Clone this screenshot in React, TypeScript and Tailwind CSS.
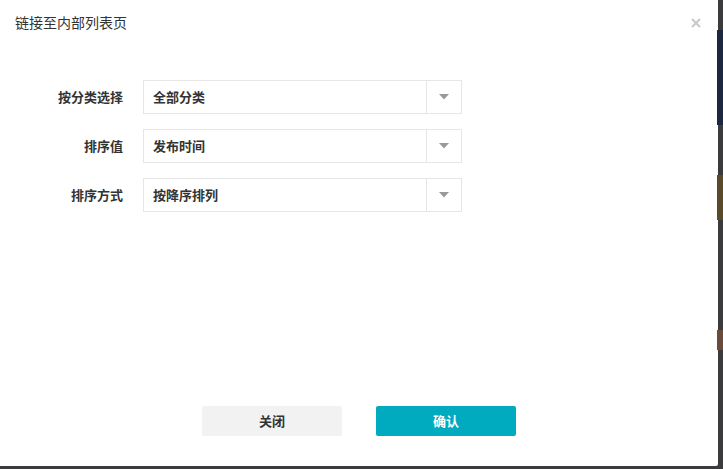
import React from "react";

const font = { fontFamily: '"Noto Sans CJK SC", "Noto Sans", sans-serif' };

function Select({ value }: { value: string }) {
  return (
    <div className="flex h-[34px] w-[319px] border border-[#e6e6e6] bg-white">
      <div className="flex flex-1 items-center pl-[9px] text-[13px] font-bold text-[#333]">{value}</div>
      <div className="flex w-[35px] items-center justify-center border-l border-[#e6e6e6]">
        <svg width="10" height="6" viewBox="0 0 10 6">
          <path d="M0 0 H10 L5 5.5 Z" fill="#999" />
        </svg>
      </div>
    </div>
  );
}

export default function App() {
  const rows = [
    ["按分类选择", "全部分类"],
    ["排序值", "发布时间"],
    ["排序方式", "按降序排列"],
  ];
  return (
    <div className="relative h-[469px] w-[723px] overflow-hidden bg-[#3b3b3d]" style={font}>
      <div className="absolute right-0 top-[30px] h-[95px] w-[6px] bg-[#1c2740]" />
      <div className="absolute right-0 top-[175px] h-[45px] w-[6px] bg-[#5a4a2a]" />
      <div className="absolute right-0 top-[330px] h-[20px] w-[6px] bg-[#6a4a3a]" />
      <div className="flex h-[466px] w-[718px] flex-col rounded-br-[2px] bg-white">
        <div className="flex h-[44px] items-center justify-between pl-[15px] pr-[17px]">
          <span className="text-[14px] text-[#333]">链接至内部列表页</span>
          <svg width="10" height="10" viewBox="0 0 10 10" className="mt-[1px]">
            <path d="M1 1 L9 9 M9 1 L1 9" stroke="#c8c8c8" strokeWidth="2" />
          </svg>
        </div>
        <div className="mt-[36px] flex flex-col gap-[15px]">
          {rows.map(([label, value]) => (
            <div key={label} className="flex items-center">
              <div className="w-[123px] text-right text-[13px] font-bold text-[#333]">{label}</div>
              <div className="ml-[20px]">
                <Select value={value} />
              </div>
            </div>
          ))}
        </div>
        <div className="flex-1" />
        <div className="mb-[30px] flex justify-center gap-[34px]">
          <button className="h-[30px] w-[140px] rounded-[2px] bg-[#f2f2f2] text-[13px] font-bold text-[#333]">关闭</button>
          <button className="h-[30px] w-[140px] rounded-[2px] bg-[#00aabf] text-[13px] font-bold text-white">确认</button>
        </div>
      </div>
    </div>
  );
}
